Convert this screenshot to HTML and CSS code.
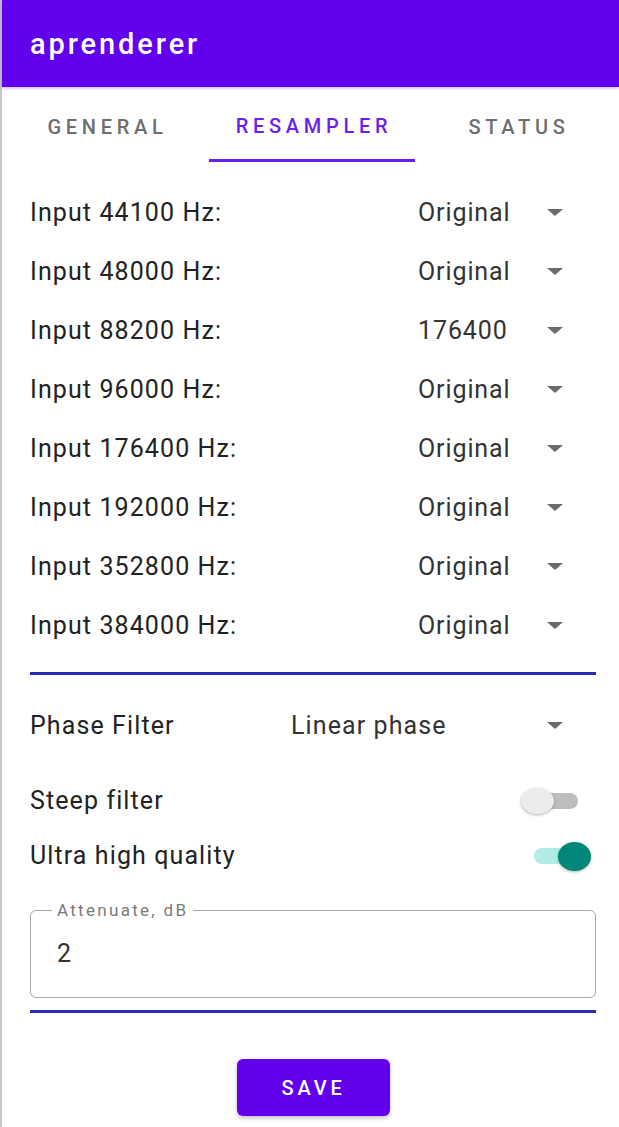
FILE: index.html
```html
<!DOCTYPE html>
<html>
<head>
<meta charset="utf-8">
<link rel="stylesheet" href="styles.css">
</head>
<body>
<div class="app">
  <header class="appbar"><span class="title">aprenderer</span></header>
  <nav class="tabs">
    <div class="tab">GENERAL</div>
    <div class="tab active">RESAMPLER</div>
    <div class="tab">STATUS</div>
  </nav>
  <main class="content">
    <section class="rates">
      <div class="row"><span class="label">Input 44100 Hz:</span><span class="value">Original</span><span class="caret"></span></div>
      <div class="row"><span class="label">Input 48000 Hz:</span><span class="value">Original</span><span class="caret"></span></div>
      <div class="row"><span class="label">Input 88200 Hz:</span><span class="value">176400</span><span class="caret"></span></div>
      <div class="row"><span class="label">Input 96000 Hz:</span><span class="value">Original</span><span class="caret"></span></div>
      <div class="row"><span class="label">Input 176400 Hz:</span><span class="value">Original</span><span class="caret"></span></div>
      <div class="row"><span class="label">Input 192000 Hz:</span><span class="value">Original</span><span class="caret"></span></div>
      <div class="row"><span class="label">Input 352800 Hz:</span><span class="value">Original</span><span class="caret"></span></div>
      <div class="row"><span class="label">Input 384000 Hz:</span><span class="value">Original</span><span class="caret"></span></div>
    </section>
    <hr class="divider first">
    <div class="row phase"><span class="label">Phase Filter</span><span class="value">Linear phase</span><span class="caret"></span></div>
    <div class="switch-row steep"><span class="label">Steep filter</span><span class="switch off"><span class="track"></span><span class="thumb"></span></span></div>
    <div class="switch-row ultra"><span class="label">Ultra high quality</span><span class="switch on"><span class="track"></span><span class="thumb"></span></span></div>
    <fieldset class="field">
      <legend>Attenuate, dB</legend>
      <span class="field-value">2</span>
    </fieldset>
    <hr class="divider second">
    <div class="actions"><button class="save">SAVE</button></div>
  </main>
</div>
</body>
</html>
```
FILE: styles.css
```css
html, body {
  margin: 0;
  padding: 0;
  background: #ffffff;
}
body {
  font-family: Roboto, "Noto Sans", sans-serif;
  width: 619px;
  height: 1127px;
  overflow: hidden;
}
.app {
  border-left: 2px solid #cdc6c2;
  height: 1127px;
  box-sizing: border-box;
}
.appbar {
  height: 87px;
  background: #6200ee;
  display: flex;
  align-items: center;
  padding-left: 28px;
  box-shadow: 0 1px 3px rgba(98, 0, 238, 0.35);
  position: relative;
}
.title {
  color: #ffffff;
  font-size: 29px;
  font-weight: 500;
  letter-spacing: 2.9px;
}
.tabs {
  display: grid;
  grid-template-columns: 207px 206px 1fr;
  height: 75px;
}
.tab {
  display: flex;
  align-items: center;
  justify-content: center;
  font-size: 20px;
  font-weight: 500;
  letter-spacing: 4.7px;
  padding-left: 4px;
  color: #6e6e6e;
  padding-top: 5px;
  box-sizing: border-box;
}
.tab.active {
  color: #6a1ff0;
  border-bottom: 3px solid #6a1ff0;
}
.content {
  padding: 21px 23px 0 28px;
}
.row {
  display: grid;
  grid-template-columns: 388px 117px 40px;
  align-items: center;
  height: 59px;
  font-size: 25px;
  letter-spacing: 1.1px;
  color: #222222;
}
.value {
  color: #333333;
  letter-spacing: 0.9px;
}
.caret {
  justify-self: center;
  width: 0;
  height: 0;
  border-left: 8px solid transparent;
  border-right: 8px solid transparent;
  border-top: 7px solid #6b6b6b;
}
.divider {
  border: none;
  height: 3px;
  background: #2a2ab4;
  margin: 17px 0 0 0;
}
.phase {
  grid-template-columns: 261px 244px 40px;
  margin-top: 21px;
}
.phase .value {
  letter-spacing: 1.1px;
}
.switch-row {
  display: flex;
  justify-content: space-between;
  align-items: center;
  height: 55px;
  font-size: 25px;
  letter-spacing: 1.1px;
  color: #222222;
}
.steep {
  margin-top: 18px;
}
.switch {
  position: relative;
  width: 60px;
  height: 30px;
}
.switch .track {
  position: absolute;
  top: 7px;
  height: 16px;
  border-radius: 8px;
}
.switch .thumb {
  position: absolute;
  border-radius: 50%;
  box-shadow: 0 1px 3px rgba(0, 0, 0, 0.3);
}
.switch.off {
  margin-right: 15px;
}
.switch.off .track {
  left: 10px;
  width: 47px;
  background: #bdbdbd;
}
.switch.off .thumb {
  left: 0;
  top: 2px;
  width: 33px;
  height: 26px;
  background: #ececec;
}
.switch.on {
  margin-right: 2px;
}
.switch.on .track {
  left: 0;
  width: 42px;
  background: #b2ece6;
}
.switch.on .thumb {
  left: 24px;
  top: 1px;
  width: 33px;
  height: 29px;
  background: #00877a;
}
.field {
  margin: 19px 0 0 0;
  border: 1.5px solid #a6a6a6;
  border-radius: 6px;
  height: 96px;
  box-sizing: border-box;
  padding: 0 0 0 26px;
  position: relative;
}
.field legend {
  font-size: 17px;
  letter-spacing: 2.3px;
  color: #7a7a7a;
  padding: 0 5px;
  margin-left: -5px;
  line-height: 16px;
}
.field-value {
  display: block;
  font-size: 25px;
  color: #333333;
  margin-top: 21px;
}
.divider.second {
  margin-top: 12px;
}
.actions {
  display: flex;
  justify-content: center;
  padding-top: 46px;
}
.save {
  width: 153px;
  height: 57px;
  background: #6200ee;
  color: #ffffff;
  border: none;
  border-radius: 6px;
  font-family: Roboto, "Noto Sans", sans-serif;
  font-size: 20px;
  font-weight: 500;
  letter-spacing: 3.8px;
  padding-left: 7px;
  box-shadow: 0 2px 4px rgba(0, 0, 0, 0.25);
}
```
